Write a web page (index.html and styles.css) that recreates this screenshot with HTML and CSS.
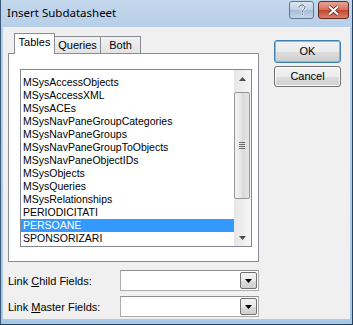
FILE: index.html
```html
<!DOCTYPE html>
<html>
<head>
<meta charset="utf-8">
<link rel="stylesheet" href="styles.css">
</head>
<body>
<div class="window">
  <div class="titlebar">
    <span class="title">Insert Subdatasheet</span>
    <div class="caption-btns">
      <div class="cbtn help">
        <svg width="10" height="12" viewBox="0 0 10 12"><path d="M2 3.5 C2 1.5 3.5 1 5 1 C6.8 1 8 2 8 3.5 C8 5.3 5.3 5.6 5.3 7.8" fill="none" stroke="#fff" stroke-width="2.2"/><rect x="4.1" y="9" width="2.4" height="2.4" fill="#fff"/><path d="M2 3.5 C2 1.5 3.5 1 5 1 C6.8 1 8 2 8 3.5 C8 5.3 5.3 5.6 5.3 7.8" fill="none" stroke="#3a4a5e" stroke-width="1"/><rect x="4.7" y="9.5" width="1.3" height="1.3" fill="#3a4a5e"/></svg>
      </div>
      <div class="cbtn close">
        <svg width="13" height="11" viewBox="0 0 13 11"><path d="M2 1.5 L11 9.5 M11 1.5 L2 9.5" stroke="#5a1a14" stroke-width="3.6"/><path d="M2 1.5 L11 9.5 M11 1.5 L2 9.5" stroke="#fff" stroke-width="2.2"/></svg>
      </div>
    </div>
  </div>
  <div class="client">
    <div class="top">
      <div class="tabctl">
        <div class="tabs">
          <div class="tab active">Tables</div>
          <div class="tab t-queries">Queries</div>
          <div class="tab t-both">Both</div>
        </div>
        <div class="panel">
          <div class="list">
            <div class="items">
              <div class="item">MSysAccessObjects</div>
              <div class="item">MSysAccessXML</div>
              <div class="item">MSysACEs</div>
              <div class="item">MSysNavPaneGroupCategories</div>
              <div class="item">MSysNavPaneGroups</div>
              <div class="item">MSysNavPaneGroupToObjects</div>
              <div class="item">MSysNavPaneObjectIDs</div>
              <div class="item">MSysObjects</div>
              <div class="item">MSysQueries</div>
              <div class="item">MSysRelationships</div>
              <div class="item">PERIODICITATI</div>
              <div class="item selected">PERSOANE</div>
              <div class="item">SPONSORIZARI</div>
            </div>
            <div class="vscroll">
              <div class="arrow up"><svg width="7" height="4" viewBox="0 0 7 4"><path d="M0 4 L3.5 0 L7 4 Z" fill="#4d4d4d"/></svg></div>
              <div class="track-a"></div>
              <div class="thumb"><div class="grip"><i></i><i></i><i></i><i></i></div></div>
              <div class="track-b"></div>
              <div class="arrow down"><svg width="7" height="4" viewBox="0 0 7 4"><path d="M0 0 L3.5 4 L7 0 Z" fill="#4d4d4d"/></svg></div>
            </div>
          </div>
        </div>
      </div>
      <div class="buttons">
        <div class="btn default">OK</div>
        <div class="btn">Cancel</div>
      </div>
    </div>
    <div class="field first">
      <span class="label">Link <u>C</u>hild Fields:</span>
      <div class="combo"><div class="drop"><svg width="7" height="4" viewBox="0 0 7 4"><path d="M0 0 L3.5 4 L7 0 Z" fill="#000"/></svg></div></div>
    </div>
    <div class="field">
      <span class="label">Link <u>M</u>aster Fields:</span>
      <div class="combo"><div class="drop"><svg width="7" height="4" viewBox="0 0 7 4"><path d="M0 0 L3.5 4 L7 0 Z" fill="#000"/></svg></div></div>
    </div>
  </div>
</div>
</body>
</html>
```
FILE: styles.css
```css
* { box-sizing: border-box; }
html, body { margin: 0; padding: 0; background: #fff; }
.window {
  width: 353px; height: 325px;
  background: linear-gradient(to bottom, #c3d7ec 0, #b7cfe8 27px, #a9c6e6 100%);
  border-left: 1px solid #3a5878;
  border-right: 1px solid #24405f;
  border-bottom: 1px solid #24405f;
  display: flex; flex-direction: column;
  font-family: "Liberation Sans", Arial, sans-serif;
  font-size: 10.5px;
  color: #000;
}
.titlebar {
  height: 27px;
  display: flex; align-items: flex-start;
  padding-left: 6px;
}
.title {
  font-family: "Noto Sans", "Open Sans", sans-serif;
  font-size: 11.5px;
  line-height: 26px;
  color: #000;
  flex: 1;
}
.caption-btns { display: flex; gap: 4px; margin-top: 1px; margin-right: 3px; }
.cbtn {
  height: 18px;
  border: 1px solid #4f6179;
  border-radius: 3px;
  display: flex; align-items: center; justify-content: center;
}
.help {
  width: 25px;
  background: linear-gradient(to bottom, #dbe6f2 0, #c0d1e4 50%, #a7bdd7 51%, #c2d4e8 100%);
  border-color: #62758e;
}
.close {
  width: 31px;
  background: linear-gradient(to bottom, #e8a493 0, #d4705c 50%, #c5452f 51%, #d8806a 100%);
  border-color: #5e2a22;
}
.client {
  flex: 1;
  margin: 0 2px 3px 2px;
  background: #f0f0f0;
  border-bottom: 2px solid #a8cdec;
  padding: 6px 0 0 5px;
}
.top { display: flex; }
.tabctl { width: 251px; }
.tabs { display: flex; height: 20px; align-items: flex-end; padding-left: 6px; font-size: 11px; }
.tab {
  height: 17px;
  border: 1px solid #898c95;
  border-bottom: none;
  background: linear-gradient(to bottom, #f2f2f2, #e3e3e3);
  text-align: center;
  line-height: 16px;
  margin-left: -1px;
}
.tab.active {
  height: 21px;
  margin-left: 0;
  margin-bottom: -1px;
  position: relative; z-index: 1;
  background: #fff;
  width: 41px;
  line-height: 17px;
}
.t-queries { width: 47px; }
.t-both { width: 41px; }
.panel {
  height: 209px;
  border: 1px solid #898c95;
  background: #fff;
  padding: 15px 6px 0 11px;
}
.list {
  width: 232px; height: 178px;
  border: 1px solid #828790;
  display: flex;
  background: #fff;
}
.items { flex: 1; padding-top: 6px; }
.item {
  height: 13px; line-height: 13px;
  padding-left: 2px;
  white-space: nowrap;
  color: #000;
}
.item.selected { background: #3399ff; color: #fff; }
.vscroll {
  width: 17px;
  display: flex; flex-direction: column;
  background: linear-gradient(to right, #e6e6e6, #f6f6f6);
}
.arrow { height: 17px; display: flex; align-items: center; justify-content: center; }
.track-a { height: 5px; }
.thumb {
  height: 107px;
  margin: 0 1px 0 0;
  border: 1px solid #979797;
  border-radius: 2px;
  background: linear-gradient(to right, #f3f3f3, #e4e4e4 50%, #d8d8d8 51%, #e6e6e6);
  display: flex; align-items: center; justify-content: center;
}
.grip { display: flex; flex-direction: column; gap: 1px; }
.grip i { display: block; width: 6px; height: 1px; background: #6e6e6e; }
.track-b { flex: 1; }
.buttons {
  margin-left: 15px;
  margin-top: 7px;
  display: flex; flex-direction: column; gap: 3px;
}
.btn {
  width: 67px; height: 21px;
  border: 1px solid #707070;
  border-radius: 3px;
  background: linear-gradient(to bottom, #f2f2f2 0, #ebebeb 50%, #dddddd 51%, #cfcfcf 100%);
  box-shadow: inset 0 0 0 1px #fcfcfc;
  text-align: center;
  line-height: 19px;
  font-size: 11px;
}
.btn.default {
  height: 23px;
  border-color: #3c7fb1;
  box-shadow: inset 0 0 0 1px #48d6f8;
  line-height: 21px;
}
.field {
  display: flex; align-items: center;
  height: 21px;
  margin-top: 5px;
}
.field.first { margin-top: 8px; }
.label { width: 112px; font-size: 11px; }
.label u { text-decoration: underline; }
.combo {
  width: 139px; height: 21px;
  border: 1px solid #abadb3;
  border-top-color: #8e8f8f;
  background: #fff;
  display: flex; justify-content: flex-end; align-items: center;
  padding-right: 1px;
}
.drop {
  width: 17px; height: 17px;
  border: 1px solid #707070;
  border-radius: 2px;
  background: linear-gradient(to bottom, #f2f2f2 0, #ebebeb 50%, #dddddd 51%, #cfcfcf 100%);
  display: flex; align-items: center; justify-content: center;
}
```
